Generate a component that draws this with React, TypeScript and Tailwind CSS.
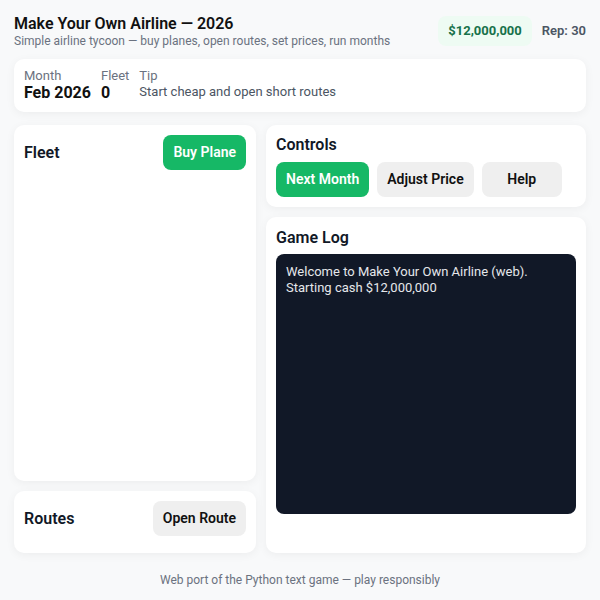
import React from "react";

const card = "bg-white rounded-[10px] shadow-[0_2px_10px_rgba(0,0,0,0.05)]";

export default function App() {
  return (
    <div className="min-h-screen bg-[#f8f9fa] px-[14px] pt-[14px] pb-[14px] font-['Roboto',sans-serif] text-[#111827]">
      <header className="flex items-center justify-between h-[34px]">
        <div className="flex flex-col">
          <h1 className="text-[16px] font-semibold leading-[20px] text-[#111]">Make Your Own Airline — 2026</h1>
          <p className="text-[12px] leading-[14px] text-[#6b7280]">Simple airline tycoon — buy planes, open routes, set prices, run months</p>
        </div>
        <div className="flex items-center gap-[10px]">
          <div className="bg-[#eefbf3] text-[#17714a] font-bold text-[13px] rounded-lg px-[10px] h-[30px] flex items-center">$12,000,000</div>
          <div className="text-[#4b5563] font-semibold text-[13px]">Rep: 30</div>
        </div>
      </header>

      <div className={`${card} mt-[11px] h-[53px] px-[10px] flex items-center gap-[10px]`}>
        <div className="flex flex-col">
          <span className="text-[13px] leading-[15px] text-[#6b7280]">Month</span>
          <span className="text-[16px] leading-[20px] font-bold text-[#111]">Feb 2026</span>
        </div>
        <div className="flex flex-col">
          <span className="text-[13px] leading-[15px] text-[#6b7280]">Fleet</span>
          <span className="text-[16px] leading-[20px] font-bold text-[#111]">0</span>
        </div>
        <div className="flex flex-col self-start pt-[9px]">
          <span className="text-[13px] leading-[15px] text-[#6b7280]">Tip</span>
          <span className="text-[13px] leading-[17px] text-[#4b5563]">Start cheap and open short routes</span>
        </div>
      </div>

      <div className="grid grid-cols-[242px_1fr] gap-[10px] mt-[13px]">
        <div className="flex flex-col gap-[10px]">
          <div className={`${card} h-[356px] p-[10px]`}>
            <div className="flex items-center justify-between">
              <h2 className="text-[16px] font-semibold">Fleet</h2>
              <button className="h-[35px] px-[10px] rounded-lg bg-[#16b866] text-white font-semibold text-[14px]">Buy Plane</button>
            </div>
          </div>
          <div className={`${card} h-[62px] px-[10px] pt-[10px]`}>
            <div className="flex items-center justify-between">
              <h2 className="text-[16px] font-semibold">Routes</h2>
              <button className="h-[35px] px-[10px] rounded-lg bg-[#efefef] text-[#111] font-semibold text-[14px]">Open Route</button>
            </div>
          </div>
        </div>
        <div className="flex flex-col gap-[10px]">
          <div className={`${card} h-[82px] p-[10px]`}>
            <h2 className="text-[16px] font-semibold leading-[20px]">Controls</h2>
            <div className="flex gap-[8px] mt-[7px]">
              <button className="h-[35px] px-[10px] rounded-lg bg-[#16b866] text-white font-semibold text-[14px]">Next Month</button>
              <button className="h-[35px] px-[10px] rounded-lg bg-[#efefef] text-[#111] font-semibold text-[14px]">Adjust Price</button>
              <button className="h-[35px] w-[80px] rounded-lg bg-[#efefef] text-[#111] font-semibold text-[14px]">Help</button>
            </div>
          </div>
          <div className={`${card} h-[336px] p-[10px]`}>
            <h2 className="text-[16px] font-semibold leading-[20px] mt-[1px]">Game Log</h2>
            <div className="mt-[6px] h-[260px] rounded-lg bg-[#111827] text-[#e5e7eb] text-[13px] leading-[16px] p-[10px]">
              <div>Welcome to Make Your Own Airline (web).</div>
              <div>Starting cash $12,000,000</div>
            </div>
          </div>
        </div>
      </div>

      <footer className="text-center text-[12px] text-[#6b7280] mt-[18px]">Web port of the Python text game — play responsibly</footer>
    </div>
  );
}
